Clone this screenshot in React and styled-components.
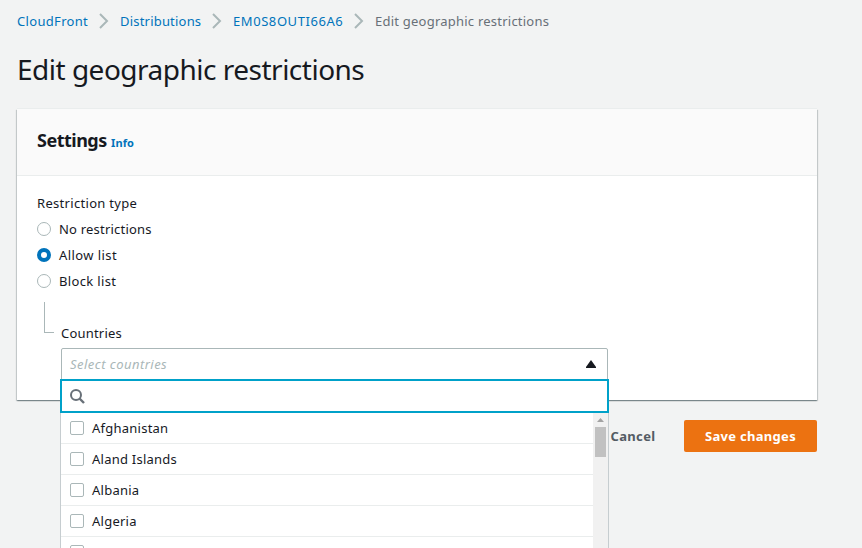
import React from "react";
import styled, { createGlobalStyle } from "styled-components";

const Global = createGlobalStyle`
  *, *::before, *::after { box-sizing: border-box; }
  body {
    margin: 0;
    overflow: hidden;
    background: #f2f3f3;
    color: #16191f;
    font: 440 13px/20px "Noto Sans", "Open Sans", sans-serif;
  }
`;

const Page = styled.main`
  height: 548px;
  padding: 11px 45px 0 17px;
  overflow: hidden;
`;

const Breadcrumbs = styled.nav`
  display: flex;
  height: 20px;
  white-space: nowrap;
`;

const Crumb = styled.a`
  width: ${(p) => p.$width}px;
  color: ${(p) => (p.$current ? "#687078" : "#0073bb")};
  letter-spacing: ${(p) => p.$spacing || 0}px;
`;

const Chevron = styled.svg`
  width: 10px;
  height: 16px;
  margin: 2px 11px 0;
  fill: none;
  stroke: #aab7b8;
  stroke-width: 2;
`;

const Title = styled.h1`
  margin: 20px 0 0;
  font-size: 28px;
  font-weight: 400;
  line-height: 36px;
  letter-spacing: -0.5px;
  white-space: nowrap;
`;

const Card = styled.section`
  height: 291px;
  margin-top: 22px;
  background: #fff;
  box-shadow: 0 1px 1px 0 rgba(0, 28, 36, 0.3), 1px 1px 1px 0 rgba(0, 28, 36, 0.15),
    -1px 1px 1px 0 rgba(0, 28, 36, 0.15), 0 -1px 0 0 #eaeded;
`;

const CardHeader = styled.header`
  display: flex;
  align-items: baseline;
  gap: 4px;
  height: 67px;
  padding: 19px 20px 0;
  border-bottom: 1px solid #eaeded;
  background: #fafafa;
`;

const CardTitle = styled.h2`
  width: 70px;
  margin: 0;
  font-size: 18px;
  font-weight: 700;
  line-height: 24px;
  letter-spacing: -0.5px;
  white-space: nowrap;
`;

const InfoLink = styled.a`
  color: #0073bb;
  font-size: 11px;
  font-weight: 700;
  letter-spacing: 0.1px;
`;

const CardBody = styled.div`
  padding: 17px 20px 0;
`;

const Label = styled.div`
  height: 20px;
  letter-spacing: ${(p) => p.$spacing || 0}px;
  white-space: nowrap;
`;

const RadioGroup = styled.div`
  display: flex;
  flex-direction: column;
  gap: 6px;
  margin-top: 6px;
`;

const RadioRow = styled.label`
  display: flex;
  gap: 8px;
  height: 20px;
  letter-spacing: ${(p) => p.$spacing || 0}px;
`;

const RadioMark = styled.span`
  width: 14px;
  height: 14px;
  margin-top: 3px;
  border: ${(p) => (p.$checked ? "4px solid #0073bb" : "1px solid #aab7b8")};
  border-radius: 50%;
  background: #fff;
`;

const Nested = styled.div`
  display: flex;
  gap: 7px;
  margin: 11px 0 0 7px;
`;

const Elbow = styled.div`
  width: 10px;
  height: 31px;
  border: solid #aab7b8;
  border-width: 0 0 1px 1px;
`;

const Field = styled.div`
  position: relative;
  width: 547px;
  padding-top: 21px;
`;

const SelectBox = styled.div`
  display: flex;
  align-items: center;
  justify-content: space-between;
  height: 33px;
  margin-top: 5px;
  padding: 0 11px 2px 8px;
  border: 1px solid #aab7b8;
  border-radius: 2px 2px 0 0;
  background: #fff;
`;

const Placeholder = styled.span`
  color: #aab7b8;
  font-style: italic;
  letter-spacing: 0.47px;
`;

const Caret = styled.svg`
  width: 10px;
  height: 8px;
  fill: #16191f;
`;

const Dropdown = styled.div`
  position: absolute;
  top: 77px;
  left: -1px;
  z-index: 2;
  width: 549px;
  height: 300px;
`;

const SearchBox = styled.div`
  display: flex;
  align-items: center;
  height: 34px;
  padding-left: 7px;
  border: 2px solid #00a1c9;
  background: #fff;
`;

const SearchIcon = styled.svg`
  width: 16px;
  height: 16px;
  fill: none;
  stroke: #687078;
  stroke-width: 2;
`;

const ListPane = styled.div`
  display: flex;
  height: 266px;
  border: solid #c6cdd0;
  border-width: 0 1px;
  background: #fff;
`;

const Options = styled.div`
  flex: 1;
`;

const Option = styled.div`
  display: flex;
  gap: 8px;
  height: 31px;
  padding: 5px 9px;
  border-bottom: 1px solid #eaeded;
  letter-spacing: 0.24px;
`;

const CheckMark = styled.span`
  width: 14px;
  height: 14px;
  margin-top: 3px;
  border: 1px solid #aab7b8;
  border-radius: 2px;
`;

const Scrollbar = styled.div`
  width: 15px;
  padding: 5px 2px 0;
  background: #f1f1f1;
`;

const ScrollArrow = styled.svg`
  display: block;
  width: 7px;
  height: 4px;
  margin: 0 2px 5px;
  fill: #a3a3a3;
`;

const Thumb = styled.div`
  width: 11px;
  height: 30px;
  background: #c1c1c1;
`;

const Actions = styled.footer`
  display: flex;
  justify-content: flex-end;
  gap: 28px;
  margin-top: 20px;
`;

const Button = styled.button`
  width: ${(p) => p.$width}px;
  height: 32px;
  padding: 0;
  border: 0;
  border-radius: 2px;
  background: ${(p) => (p.$primary ? "#ec7211" : "transparent")};
  color: ${(p) => (p.$primary ? "#fff" : "#545b64")};
  font: 700 13px/20px "Noto Sans", "Open Sans", sans-serif;
  letter-spacing: ${(p) => p.$spacing || 0}px;
  white-space: nowrap;
`;

const Separator = () => (
  <Chevron viewBox="0 0 10 16">
    <path d="M1 1l7 7-7 7" />
  </Chevron>
);

const countries = ["Afghanistan", "Aland Islands", "Albania", "Algeria", ""];

export default function App() {
  return (
    <>
      <Global />
      <Page>
        <Breadcrumbs>
          <Crumb $width={71} $spacing={0.32}>CloudFront</Crumb>
          <Separator />
          <Crumb $width={81} $spacing={0.2}>Distributions</Crumb>
          <Separator />
          <Crumb $width={110} $spacing={0.57}>EM0S8OUTI66A6</Crumb>
          <Separator />
          <Crumb $width={175} $spacing={0.23} $current>Edit geographic restrictions</Crumb>
        </Breadcrumbs>
        <Title>Edit geographic restrictions</Title>
        <Card>
          <CardHeader>
            <CardTitle>Settings</CardTitle>
            <InfoLink>Info</InfoLink>
          </CardHeader>
          <CardBody>
            <Label $spacing={0.31}>Restriction type</Label>
            <RadioGroup>
              <RadioRow $spacing={0.21}><RadioMark />No restrictions</RadioRow>
              <RadioRow $spacing={0.43}><RadioMark $checked />Allow list</RadioRow>
              <RadioRow $spacing={0.35}><RadioMark />Block list</RadioRow>
            </RadioGroup>
            <Nested>
              <Elbow />
              <Field>
                <Label $spacing={0.2}>Countries</Label>
                <SelectBox>
                  <Placeholder>Select countries</Placeholder>
                  <Caret viewBox="0 0 10 8"><path d="M5 0l5 7v1H0V7z" /></Caret>
                </SelectBox>
                <Dropdown>
                  <SearchBox>
                    <SearchIcon viewBox="0 0 16 16">
                      <circle cx="7" cy="7" r="5" />
                      <path d="M10.5 10.5l4.5 4.5" strokeWidth="2.4" />
                    </SearchIcon>
                  </SearchBox>
                  <ListPane>
                    <Options>
                      {countries.map((name) => (
                        <Option key={name}><CheckMark />{name}</Option>
                      ))}
                    </Options>
                    <Scrollbar>
                      <ScrollArrow viewBox="0 0 7 4"><path d="M3.5 0L7 4H0z" /></ScrollArrow>
                      <Thumb />
                    </Scrollbar>
                  </ListPane>
                </Dropdown>
              </Field>
            </Nested>
          </CardBody>
        </Card>
        <Actions>
          <Button $width={46} $spacing={0.35}>Cancel</Button>
          <Button $primary $width={133} $spacing={0.3}>Save changes</Button>
        </Actions>
      </Page>
    </>
  );
}
